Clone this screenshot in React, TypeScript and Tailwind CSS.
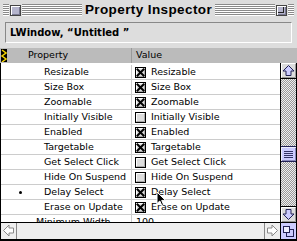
import React from 'react';

type Row = { name: string; checked: boolean; bullet?: boolean };

const ROWS: Row[] = [
  { name: 'Resizable', checked: true },
  { name: 'Size Box', checked: true },
  { name: 'Zoomable', checked: true },
  { name: 'Initially Visible', checked: false },
  { name: 'Enabled', checked: true },
  { name: 'Targetable', checked: true },
  { name: 'Get Select Click', checked: false },
  { name: 'Hide On Suspend', checked: false },
  { name: 'Delay Select', checked: true, bullet: true },
  { name: 'Erase on Update', checked: true },
];

const Stripes = ({ className = '' }: { className?: string }) => (
  <div
    className={`h-[12px] bg-[repeating-linear-gradient(to_bottom,#8a8a8a_0px,#8a8a8a_1px,#ffffff_1px,#ffffff_2px)] ${className}`}
  />
);

const CheckBox = ({ checked }: { checked: boolean }) => (
  <svg width="11" height="11" viewBox="0 0 11 11" className="shrink-0">
    <rect x="0.5" y="0.5" width="10" height="10" fill="#dddddd" stroke="#000" />
    <path d="M1.5 9.5V1.5H9.5" fill="none" stroke="#ffffff" />
    <path d="M9.5 1.5V9.5H1.5" fill="none" stroke="#aaaaaa" />
    {checked && (
      <path d="M2.5 2.5L8.5 8.5M8.5 2.5L2.5 8.5" stroke="#000" strokeWidth="2" strokeLinecap="square" />
    )}
  </svg>
);

const ArrowBox = ({ dir, active }: { dir: 'up' | 'down' | 'left' | 'right'; active: boolean }) => {
  const pts: Record<string, string> = {
    up: '7.5,2.5 13,8 10,8 10,12.5 5,12.5 5,8 2,8',
    down: '7.5,12.5 13,7 10,7 10,2.5 5,2.5 5,7 2,7',
    left: '2.5,7.5 8,2 8,5 12.5,5 12.5,10 8,10 8,13',
    right: '12.5,7.5 7,2 7,5 2.5,5 2.5,10 7,10 7,13',
  };
  return (
    <svg width="15" height="15" viewBox="0 0 15 15" className="shrink-0">
      <rect x="0" y="0" width="15" height="15" fill={active ? '#dddddd' : '#eeeeee'} />
      {active && <path d="M0.5 14V0.5H14" fill="none" stroke="#ffffff" />}
      {active && <path d="M14.5 1V14.5H1" fill="none" stroke="#999999" />}
      <polygon
        points={pts[dir]}
        fill={active ? '#ccccff' : '#ffffff'}
        stroke={active ? '#222255' : '#888888'}
        strokeLinejoin="miter"
      />
    </svg>
  );
};

export default function App() {
  return (
    <div className="relative w-[297px] h-[241px] overflow-hidden bg-[#dddddd] font-['DejaVu_Sans',sans-serif] text-black">
      {/* title bar */}
      <div className="h-[20px] flex items-center px-[3px] gap-[1px]">
        <Stripes className="w-[6px]" />
        <div className="w-[11px] h-[11px] border border-[#444] bg-[#b4b4cc] shadow-[inset_1px_1px_0_#ffffff,inset_-1px_-1px_0_#77778f]" />
        <Stripes className="flex-1" />
        <div className="px-[2px] text-[13.5px] leading-[20px] font-bold tracking-[0.4px] font-['Liberation_Sans',sans-serif] whitespace-nowrap">
          Property Inspector
        </div>
        <Stripes className="flex-1" />
        <div className="relative w-[11px] h-[11px] border border-[#444] bg-[#b4b4cc] shadow-[inset_1px_1px_0_#ffffff,inset_-1px_-1px_0_#77778f]">
          <div className="absolute left-[1px] top-[1px] w-[6px] h-[6px] border-r border-b border-[#222]" />
        </div>
        <Stripes className="w-[6px]" />
      </div>

      {/* object field */}
      <div className="h-[28px] px-[5px] pt-[2px]">
        <div className="h-[21px] border border-t-[#888] border-l-[#888] border-b-white border-r-white flex items-center pl-[4px]">
          <span className="text-[10px] font-bold whitespace-nowrap">LWindow, “Untitled ”</span>
        </div>
      </div>

      {/* column header */}
      <div className="h-[15px] bg-[#bbbbbb] flex items-center text-[9.5px] relative">
        <svg width="6" height="13" viewBox="0 0 6 13" className="ml-[1px] shrink-0">
          <rect width="6" height="13" fill="#000" />
          <path d="M1 1L5 4L1 7L5 10L1 13" fill="none" stroke="#f0d000" strokeWidth="1.5" />
        </svg>
        <span className="ml-[21px] w-[103px]">Property</span>
        <div className="w-px h-full bg-[#999]" />
        <span className="ml-[4px]">Value</span>
      </div>

      {/* body */}
      <div className="h-[159px] flex border-l border-black">
        <div className="flex-1 bg-white pt-[2px] overflow-hidden text-[9.5px]">
          {ROWS.map((r) => (
            <div key={r.name} className="h-[15px] border-b border-[#cccccc] flex items-center">
              <div className="w-[130px] h-full flex items-center relative">
                {r.bullet && <div className="absolute left-[18px] top-[6px] w-[3px] h-[3px] rounded-full bg-black" />}
                <span className="pl-[43px] whitespace-nowrap">{r.name}</span>
              </div>
              <div className="w-px h-full bg-[#cccccc]" />
              <div className="flex items-center pl-[3px] gap-[5px]">
                <CheckBox checked={r.checked} />
                <span className="whitespace-nowrap">{r.name}</span>
              </div>
            </div>
          ))}
          <div className="h-[15px] flex items-center">
            <div className="w-[130px] h-full flex items-center">
              <span className="pl-[35px] whitespace-nowrap">Minimum Width</span>
            </div>
            <div className="w-px h-full bg-[#cccccc]" />
            <span className="pl-[4px]">100</span>
          </div>
        </div>

        {/* vertical scroll bar */}
        <div className="w-[17px] border-l border-r border-black flex flex-col bg-[#dddddd]">
          <div className="border-b border-black">
            <ArrowBox dir="up" active />
          </div>
          <div className="flex-1 relative bg-[repeating-conic-gradient(#999999_0_25%,#eeeeee_0_50%)] bg-[length:2px_2px]">
            <div className="absolute left-0 right-0 top-[67px] h-[16px] bg-[#ccccff] border-y border-[#222255] shadow-[inset_1px_1px_0_#eeeeff,inset_-1px_-1px_0_#8888bb] flex flex-col items-center justify-center gap-[1px]">
              <div className="w-[9px] h-px bg-[#333366]" />
              <div className="w-[9px] h-px bg-[#333366]" />
              <div className="w-[9px] h-px bg-[#333366]" />
              <div className="w-[9px] h-px bg-[#333366]" />
            </div>
          </div>
          <div className="border-t border-black">
            <ArrowBox dir="down" active />
          </div>
        </div>
      </div>

      {/* horizontal scroll bar */}
      <div className="h-[17px] border-t border-l border-black flex bg-[#eeeeee]">
        <div className="border-r border-[#888]">
          <ArrowBox dir="left" active={false} />
        </div>
        <div className="flex-1 bg-[#eeeeee]" />
        <div className="border-l border-[#888]">
          <ArrowBox dir="right" active={false} />
        </div>
        <div className="w-[17px] border-l border-r border-black bg-[#ccccff] flex items-center justify-center">
          <svg width="13" height="13" viewBox="0 0 13 13">
            <rect x="4.5" y="4.5" width="7" height="7" fill="#ccccff" stroke="#222255" />
            <rect x="1.5" y="1.5" width="6" height="6" fill="#eeeeff" stroke="#222255" />
          </svg>
        </div>
      </div>
      <div className="h-[2px] bg-black" />

      {/* mouse pointer */}
      <svg width="11" height="16" viewBox="0 0 11 16" className="absolute left-[156px] top-[191px]">
        <polygon points="1,1 1,12.5 3.8,10 5.8,14.5 7.6,13.7 5.7,9.4 9.5,9.4" fill="#000" stroke="#fff" strokeWidth="1" />
      </svg>
    </div>
  );
}
